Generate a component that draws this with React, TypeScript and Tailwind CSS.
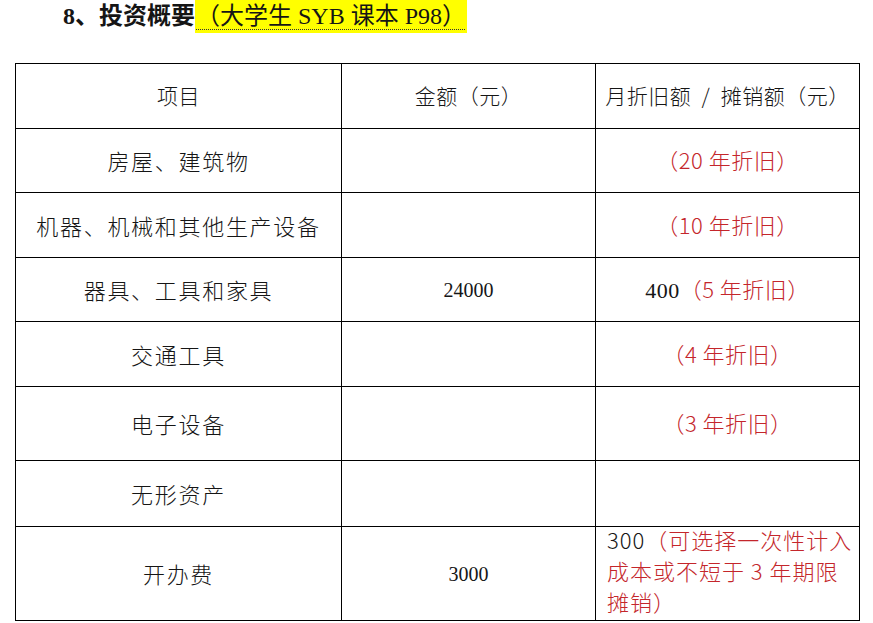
import React from "react";

const serif = { fontFamily: '"Liberation Serif", "Noto Sans CJK SC", serif' };
const sans = { fontFamily: '"Noto Sans CJK SC", "Liberation Sans", sans-serif' };

type Row = {
  name: string;
  amount?: string;
  prefix?: string;
  note?: string;
  h: string;
};

const rows: Row[] = [
  { name: "房屋、建筑物", note: "（20 年折旧）", h: "h-[64px]" },
  { name: "机器、机械和其他生产设备", note: "（10 年折旧）", h: "h-[65px]" },
  { name: "器具、工具和家具", amount: "24000", prefix: "400", note: "（5 年折旧）", h: "h-[64px]" },
  { name: "交通工具", note: "（4 年折旧）", h: "h-[65px]" },
  { name: "电子设备", note: "（3 年折旧）", h: "h-[74px]" },
  { name: "无形资产", h: "h-[66px]" },
];

const App = () => {
  return (
    <div className="w-[873px] h-[623px] overflow-hidden bg-white text-[#151515]" style={serif}>
      {/* title */}
      <div className="h-[63px] pl-[63px]">
        <div className="flex items-start text-[24px] leading-[33px] whitespace-nowrap">
          <span className="font-bold">8、投资概要</span>
          <span className="inline-block h-[33px] bg-[#ffff00] underline decoration-dotted decoration-[#333] underline-offset-[5px] decoration-1 px-[1px]">
            （大学生 SYB 课本 P98）
          </span>
        </div>
      </div>

      <table className="ml-[15px] table-fixed border-collapse">
        <colgroup>
          <col className="w-[326px]" />
          <col className="w-[254px]" />
          <col className="w-[264px]" />
        </colgroup>
        <tbody>
          <tr className="h-[65px]">
            <td className="border border-black text-center text-[21px] tracking-[0.5px]" style={sans}>
              <span className="font-light">项目</span>
            </td>
            <td className="border border-black text-center text-[21px] tracking-[0.5px]" style={sans}>
              <span className="font-light">金额（元）</span>
            </td>
            <td className="border border-black text-center text-[21px] tracking-[0.5px] whitespace-pre" style={sans}>
              <span className="font-light">{"月折旧额  /  摊销额（元）"}</span>
            </td>
          </tr>

          {rows.map((r) => (
            <tr key={r.name} className={r.h}>
              <td className="border border-black text-center text-[22px] tracking-[1.7px] whitespace-nowrap" style={sans}>
                <span className="font-light">{r.name}</span>
              </td>
              <td className="border border-black text-center text-[20px]" style={serif}>
                {r.amount}
              </td>
              <td className="border border-black text-center text-[22px] tracking-[0.5px] whitespace-nowrap">
                {r.prefix && (
                  <span className="text-[22px]" style={serif}>
                    {r.prefix}
                  </span>
                )}
                {r.note && (
                  <span className="text-[#c4262b] font-light" style={sans}>
                    {r.note}
                  </span>
                )}
              </td>
            </tr>
          ))}

          <tr className="h-[94px]">
            <td className="border border-black text-center text-[22px] tracking-[1.7px]" style={sans}>
              <span className="font-light">开办费</span>
            </td>
            <td className="border border-black text-center text-[20px]" style={serif}>
              3000
            </td>
            <td className="border border-black pl-[11px] text-left text-[22px] leading-[31px] tracking-[1px] whitespace-nowrap font-light" style={sans}>
              <div className="-mt-[6px]">
                300<span className="text-[#c4262b]">（可选择一次性计入</span>
              </div>
              <div className="text-[#c4262b]">成本或不短于 3 年期限</div>
              <div className="text-[#c4262b]">摊销）</div>
            </td>
          </tr>
        </tbody>
      </table>
    </div>
  );
};

export default App;
